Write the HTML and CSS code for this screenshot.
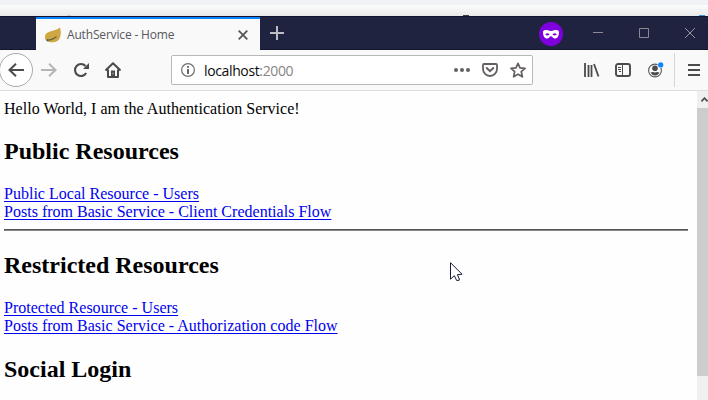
FILE: index.html
```html
<!DOCTYPE html>
<html lang="en">
<head>
<meta charset="utf-8">
<title>AuthService - Home</title>
<link rel="stylesheet" href="styles.css">
</head>
<body>
<div class="desktop"><i class="speck faint"></i><i class="speck dark"></i><i class="speck blue"></i></div>
<header class="titlebar">
  <div class="tab">
    <svg class="leaf" width="18" height="16" viewBox="0 0 18 16"><path d="M16 0.5C17.5 5 17 11.500 13.500 14C9 16.500 1 15.500 1 10.500C0.500 3 10 5.500 16 0.500Z" fill="#cfa742"/><path d="M3 13.200C7 13 10 12 12.500 9.500" fill="none" stroke="#66604c" stroke-width="1.100"/><circle cx="3.500" cy="13.200" r="1" fill="#555b5c"/></svg>
    <span class="tab-title">AuthService - Home</span>
    <svg width="10" height="10" viewBox="0 0 10 10"><path d="M.7.7 9.300 9.300M9.300.7.7 9.300" stroke="#55555a" stroke-width="1.800"/></svg>
  </div>
  <svg class="new-tab" width="14" height="14" viewBox="0 0 14 14"><path d="M0 7H14M7 0V14" stroke="#bcbdc5" stroke-width="2"/></svg>
  <div class="window-controls">
    <svg width="24" height="24" viewBox="0 0 24 24"><circle cx="12" cy="12" r="12" fill="#7f00df"/><path fill="#fff" fill-rule="evenodd" d="M4 10C4 8 7 7.700 9 8.300C11 9.300 13 9.300 15 8.300C17 7.700 20 8 20 10C20 14 18.500 16.500 16 16.500C14 16.500 13.500 14.200 12 14.200S10 16.500 8 16.500C5.500 16.500 4 14 4 10ZM6.200 12.500Q8.500 14.700 10.600 12.500Q8.400 9.800 6.200 12.500ZM13.400 12.500Q15.500 14.700 17.800 12.500Q15.600 9.800 13.400 12.500Z"/></svg>
    <svg class="minimize" width="10" height="10" viewBox="0 0 10 10"><path d="M0 4.500H10" stroke="#8f8791"/></svg>
    <svg class="maximize" width="10" height="10" viewBox="0 0 10 10"><path d="M.5.5H9.500V9.500H.5Z" fill="none" stroke="#8f8791"/></svg>
    <svg class="close" width="10" height="10" viewBox="0 0 10 10"><path d="M0 0 10 10M10 0 0 10" stroke="#9c959e"/></svg>
  </div>
</header>
<nav class="toolbar">
  <div class="back"><svg width="16" height="14" viewBox="0 0 16 14"><path d="M16 7H1.500M8 .8 1.500 7 8 13.200" fill="none" stroke="#4b4b4c" stroke-width="2"/></svg></div>
  <svg class="forward" width="16" height="14" viewBox="0 0 16 14"><path d="M0 7H14.500M8 .8 14.500 7 8 13.200" fill="none" stroke="#b5b5b6" stroke-width="2"/></svg>
  <svg class="nav-icon" width="16" height="16" viewBox="0 0 16 16"><path d="M13.200 11A6 6 0 1 1 12.500 4" fill="none" stroke="#4b4b4c" stroke-width="2.100"/><path d="M16 1V7H10Z" fill="#4b4b4c"/></svg>
  <svg class="nav-icon" width="16" height="16" viewBox="0 0 16 16"><path d="M.5 8.500 8 1.200 15.500 8.500M3 7.500V15H13V7.500" fill="none" stroke="#4b4b4c" stroke-width="2" stroke-linejoin="round"/><path d="M6 14V8.500H10V14Z" fill="#4b4b4c"/><path d="M7.500 10.500H8.500V12.500H7.500Z" fill="#aaa"/></svg>
  <div class="address">
    <svg width="14" height="14" viewBox="0 0 14 14"><circle cx="7" cy="7" r="6.400" fill="none" stroke="#707071" stroke-width="1.200"/><path d="M7 3V4.800M7 6V11" stroke="#626263" stroke-width="1.900"/></svg>
    <span class="url">localhost<span class="port">:2000</span></span>
    <svg class="dots" width="16" height="4" viewBox="0 0 16 4"><g fill="#646060"><circle cx="2" cy="2" r="2"/><circle cx="8" cy="2" r="2"/><circle cx="14" cy="2" r="2"/></g></svg>
    <svg class="pocket" width="16" height="14" viewBox="0 0 16 14"><path d="M2 1H14Q15 1 15 2V6A7 7 0 0 1 1 6V2Q1 1 2 1Z" fill="none" stroke="#646060" stroke-width="1.800"/><path d="M4.700 5 8 8.200 11.300 5" fill="none" stroke="#646060" stroke-width="2" stroke-linecap="round"/></svg>
    <svg class="star" width="16" height="16" viewBox="0 0 16 16"><path d="M8 1.300 10 5.900 15 6.400 11.300 9.700 12.400 14.800 8 12.200 3.600 14.800 4.700 9.700 1 6.400 6 5.900Z" fill="none" stroke="#646060" stroke-width="1.700" stroke-linejoin="round"/></svg>
  </div>
  <svg class="library" width="16" height="14" viewBox="0 0 16 14"><path d="M1 0V14M4.500 2V14M7.500 2V14M10 1 14.500 13.500" fill="none" stroke="#4b4b4c" stroke-width="1.800"/></svg>
  <svg class="sidebar" width="16" height="14" viewBox="0 0 16 14"><rect x="1" y="1" width="14" height="12" rx="2" fill="none" stroke="#4b4b4c" stroke-width="1.900"/><path d="M7.500 1V13" stroke="#4b4b4c"/><path d="M3 4.500H6M3 6.500H6M4 8.500H6" stroke="#4b4b4c"/></svg>
  <svg class="account" width="16" height="16" viewBox="0 0 16 16"><circle cx="7" cy="8.500" r="6.400" fill="none" stroke="#5a5a5b" stroke-width="1.100"/><circle cx="7" cy="6.300" r="2.800" fill="#4b4b4c"/><path d="M2.500 10.500Q5 9.500 7 10.500Q9 9.500 11.500 10.500Q10 13.500 7 13.500T2.500 10.500Z" fill="#4b4b4c"/><circle cx="12.700" cy="2.900" r="3.200" fill="#f9f9fa"/><circle cx="12.700" cy="2.900" r="2.600" fill="#0a84ff"/></svg>
  <div class="separator"></div>
  <svg class="menu" width="12" height="12" viewBox="0 0 12 12"><path d="M0 1H12M0 6H12M0 11H12" stroke="#4b4b4c" stroke-width="2"/></svg>
</nav>
<div class="viewport">
  <main class="page">
    <div class="greeting">Hello World, I am the Authentication Service!</div>
    <h2>Public Resources</h2>
    <a href="#">Public Local Resource - Users</a><br>
    <a href="#">Posts from Basic Service - Client Credentials Flow</a>
    <hr>
    <h2>Restricted Resources</h2>
    <a href="#">Protected Resource - Users</a><br>
    <a href="#">Posts from Basic Service - Authorization code Flow</a>
    <h2 class="social">Social Login</h2>
  </main>
  <div class="scrollbar">
    <div class="scroll-up"><svg width="7" height="5" viewBox="0 0 7 5"><path d="M.4 4.300 3.500 1.200 6.600 4.300" fill="none" stroke="#505050" stroke-width="1.800"/></svg></div>
    <div class="thumb"></div>
  </div>
</div>
<svg class="cursor" width="13" height="20" viewBox="0 0 13 20"><path d="M.5.700V17.200L4.300 13.700 6.700 18.500 9.200 18.200 9.300 17 7.400 12.700 12 12.200Z" fill="#fff" stroke="#17183a"/></svg>
</body>
</html>
```
FILE: styles.css
```css
* { box-sizing: border-box; }
body {
  margin: 0;
  width: 708px;
  height: 400px;
  overflow: hidden;
  display: flex;
  flex-direction: column;
  background: #fefefe;
}
svg { display: block; flex: none; }
.desktop {
  height: 16px;
  flex: none;
  display: flex;
  align-items: flex-end;
  border-top: 5px solid #f0f2f5;
  background: linear-gradient(#fdfdfd, #e8e8e8);
}
.speck { height: 1px; flex: none; }
.faint { width: 4px; margin-left: 67px; background: #cfcfcf; }
.dark { width: 6px; margin-left: 392px; background: #35404b; }
.blue { width: 6px; margin-left: 230px; background: #3d8fd0; }
.titlebar {
  height: 34px;
  flex: none;
  display: flex;
  align-items: center;
  padding-left: 36px;
  background: #20233f;
  border-top: 1px solid #11142e;
  box-shadow: inset 0 -1px #15172f;
}
.tab {
  width: 224px;
  height: 33px;
  display: flex;
  align-items: center;
  padding: 0 12px 0 8px;
  background: #f9f9fa;
  border-top: 2px solid #0a84ff;
}
.leaf { margin-right: 5px; }
.tab-title {
  flex: 1;
  white-space: nowrap;
  font: 12px/16px "Open Sans", sans-serif;
  letter-spacing: -0.17px;
  color: #58585a;
}
.new-tab { margin: 0 0 1px 10px; }
.window-controls { display: flex; align-items: center; margin-left: auto; padding-right: 13px; }
.minimize { margin: 0 0 2px 30px; }
.maximize, .close { margin: 0 0 2px 36px; }
.toolbar {
  height: 41px;
  flex: none;
  display: flex;
  align-items: center;
  background: #f9f9fa;
  border-bottom: 1px solid #dedede;
}
.back {
  width: 34px;
  height: 34px;
  flex: none;
  margin-left: -1px;
  display: flex;
  align-items: center;
  justify-content: center;
  border: 1px solid #aaa;
  border-radius: 50%;
  background: #fff;
}
.forward { margin-left: 8px; }
.nav-icon { margin-left: 16px; }
.address {
  width: 362px;
  height: 30px;
  flex: none;
  margin-left: 50px;
  padding: 0 6px 0 9px;
  display: flex;
  align-items: center;
  background: #fff;
  border: 1px solid #b8b8b8;
  border-radius: 2px;
}
.url {
  flex: 1;
  margin: 2px 0 0 9px;
  font: 14px/20px "Open Sans", sans-serif;
  letter-spacing: -0.37px;
  color: #0c0c0d;
}
.port { color: #858585; }
.pocket { margin-left: 12px; }
.star { margin-left: 12px; }
.library { margin-left: 51px; }
.sidebar { margin-left: 15px; }
.account { margin-left: 17px; }
.separator { width: 1px; height: 34px; margin-left: 10px; background: #d5d5d6; }
.menu { margin-left: 13px; }
.viewport { flex: 1; min-height: 0; display: flex; }
.page {
  flex: 1;
  padding: 9px 9px 0 4px;
  font: 16px/18px "Liberation Serif", serif;
  color: #000;
}
.greeting { letter-spacing: 0.02px; }
h2 { margin: 20px 0; font-size: 24px; line-height: 27px; }
a {
  color: #00e;
  letter-spacing: 0.015px;
  text-decoration: underline 1px;
  text-underline-offset: 2px;
  text-decoration-skip-ink: none;
}
hr { height: 2px; margin: 8px 0 21px; border: 0; border-top: 1px solid #555; background: #858585; }
.social { margin-top: 21px; }
.scrollbar { width: 11px; background: #f0f0f0; }
.scroll-up { height: 17px; padding: 6px 0 0 4px; }
.thumb { height: 268px; background: #cdcdcd; }
.cursor { position: absolute; left: 450px; top: 262px; }
```
